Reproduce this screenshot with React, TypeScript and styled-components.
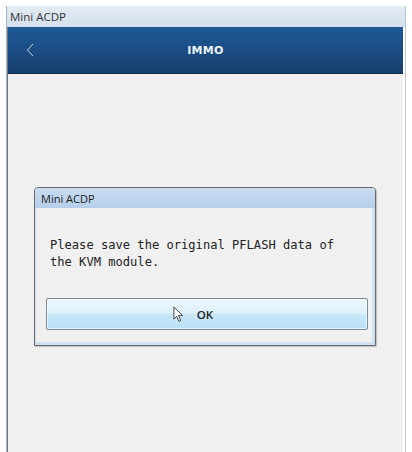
import React from "react";
import styled, { createGlobalStyle } from "styled-components";

const Global = createGlobalStyle`
  html, body { margin: 0; padding: 0; background: #ffffff; }
  body { width: 412px; height: 452px; overflow: hidden; font-family: "Open Sans", "Liberation Sans", sans-serif; }
`;

const Page = styled.div`
  padding: 6px 6px 0 6px;
  height: 452px;
  box-sizing: border-box;
`;

const Window = styled.div`
  height: 446px;
  display: flex;
  flex-direction: column;
  border-left: 1px solid #a8b4c0;
  border-right: 1px solid #b8c8d8;
  box-sizing: border-box;
`;

const TitleBar = styled.div`
  height: 21px;
  display: flex;
  align-items: center;
  padding-left: 3px;
  background: linear-gradient(#e4ecf4, #d3dfeb);
  font-size: 11.5px;
  color: #333;
  font-family: "Open Sans", "Liberation Sans", sans-serif;
`;

const Inner = styled.div`
  flex: 1;
  display: flex;
  flex-direction: column;
  margin-right: 2px;
  border-left: 1px solid #6f7780;
`;

const Header = styled.div`
  height: 46px;
  display: grid;
  grid-template-columns: 40px 1fr 40px;
  align-items: center;
  background: linear-gradient(#1f5a98, #1a4a80 60%, #163e6c);
  border-bottom: 1px solid #0f2c50;
  color: #eef3f8;
`;

const Back = styled.div`
  display: flex;
  justify-content: center;
  padding-left: 4px;
`;

const HeaderTitle = styled.div`
  text-align: center;
  font-size: 11px;
  font-weight: 600;
  letter-spacing: 0.3px;
  font-family: "DejaVu Sans", sans-serif;
`;

const Content = styled.div`
  flex: 1;
  background: #f0f0f0;
  display: flex;
  justify-content: center;
  padding-top: 113px;
  padding-right: 27px;
  padding-left: 26px;
`;

const Dialog = styled.div`
  width: 100%;
  height: 159px;
  display: flex;
  flex-direction: column;
  border: 1px solid #6a6a6a;
  border-radius: 4px 4px 0 0;
  background: #cfe0f2;
  box-shadow: 1px 1px 1px rgba(0,0,0,0.2);
  box-sizing: border-box;
`;

const DialogTitle = styled.div`
  height: 20px;
  display: flex;
  align-items: center;
  padding-left: 6px;
  font-size: 11px;
  color: #1a1a1a;
  background: linear-gradient(#c9dcf1, #b6cfea);
  border-radius: 3px 3px 0 0;
`;

const DialogBody = styled.div`
  flex: 1;
  margin: 0 2px 3px 1px;
  background: #f0f0f0;
  border-right: 1px solid #cfe6f4;
  display: flex;
  flex-direction: column;
  padding: 29px 4px 10px 10px;
`;

const Message = styled.div`
  font-family: "DejaVu Sans Mono", "Liberation Mono", monospace;
  font-size: 12.1px;
  line-height: 17px;
  color: #222;
  padding-left: 4px;
  height: 61px;
`;

const Button = styled.div`
  height: 32px;
  display: flex;
  align-items: center;
  justify-content: center;
  gap: 13px;
  padding-right: 28px;
  border: 1px solid #7a8a98;
  border-radius: 2px;
  box-sizing: border-box;
  background: linear-gradient(#eef7fd 0%, #dcf0fb 48%, #c8e7f9 52%, #bae0f6 100%);
  box-shadow: inset 0 0 0 1px rgba(255,255,255,0.6);
  font-size: 11.5px;
  font-weight: 600;
  color: #222;
`;

export default function App() {
  return (
    <>
      <Global />
      <Page>
        <Window>
          <TitleBar>Mini ACDP</TitleBar>
          <Inner>
            <Header>
              <Back>
                <svg width="8" height="14" viewBox="0 0 8 14">
                  <path d="M7 1 L1.5 7 L7 13" fill="none" stroke="#c8d6e6" strokeWidth="1" />
                </svg>
              </Back>
              <HeaderTitle>IMMO</HeaderTitle>
              <div />
            </Header>
            <Content>
              <Dialog>
                <DialogTitle>Mini ACDP</DialogTitle>
                <DialogBody>
                  <Message>
                    Please save the original PFLASH data of
                    <br />
                    the KVM module.
                  </Message>
                  <Button>
                    <svg width="11" height="17" viewBox="0 0 12 18">
                      <path d="M1 1 L1 14 L4 11 L6.5 16.5 L8.5 15.5 L6 10 L10.5 10 Z" fill="#fff" stroke="#333" strokeWidth="1" strokeLinejoin="round" />
                    </svg>
                    <span>OK</span>
                  </Button>
                </DialogBody>
              </Dialog>
            </Content>
          </Inner>
        </Window>
      </Page>
    </>
  );
}
